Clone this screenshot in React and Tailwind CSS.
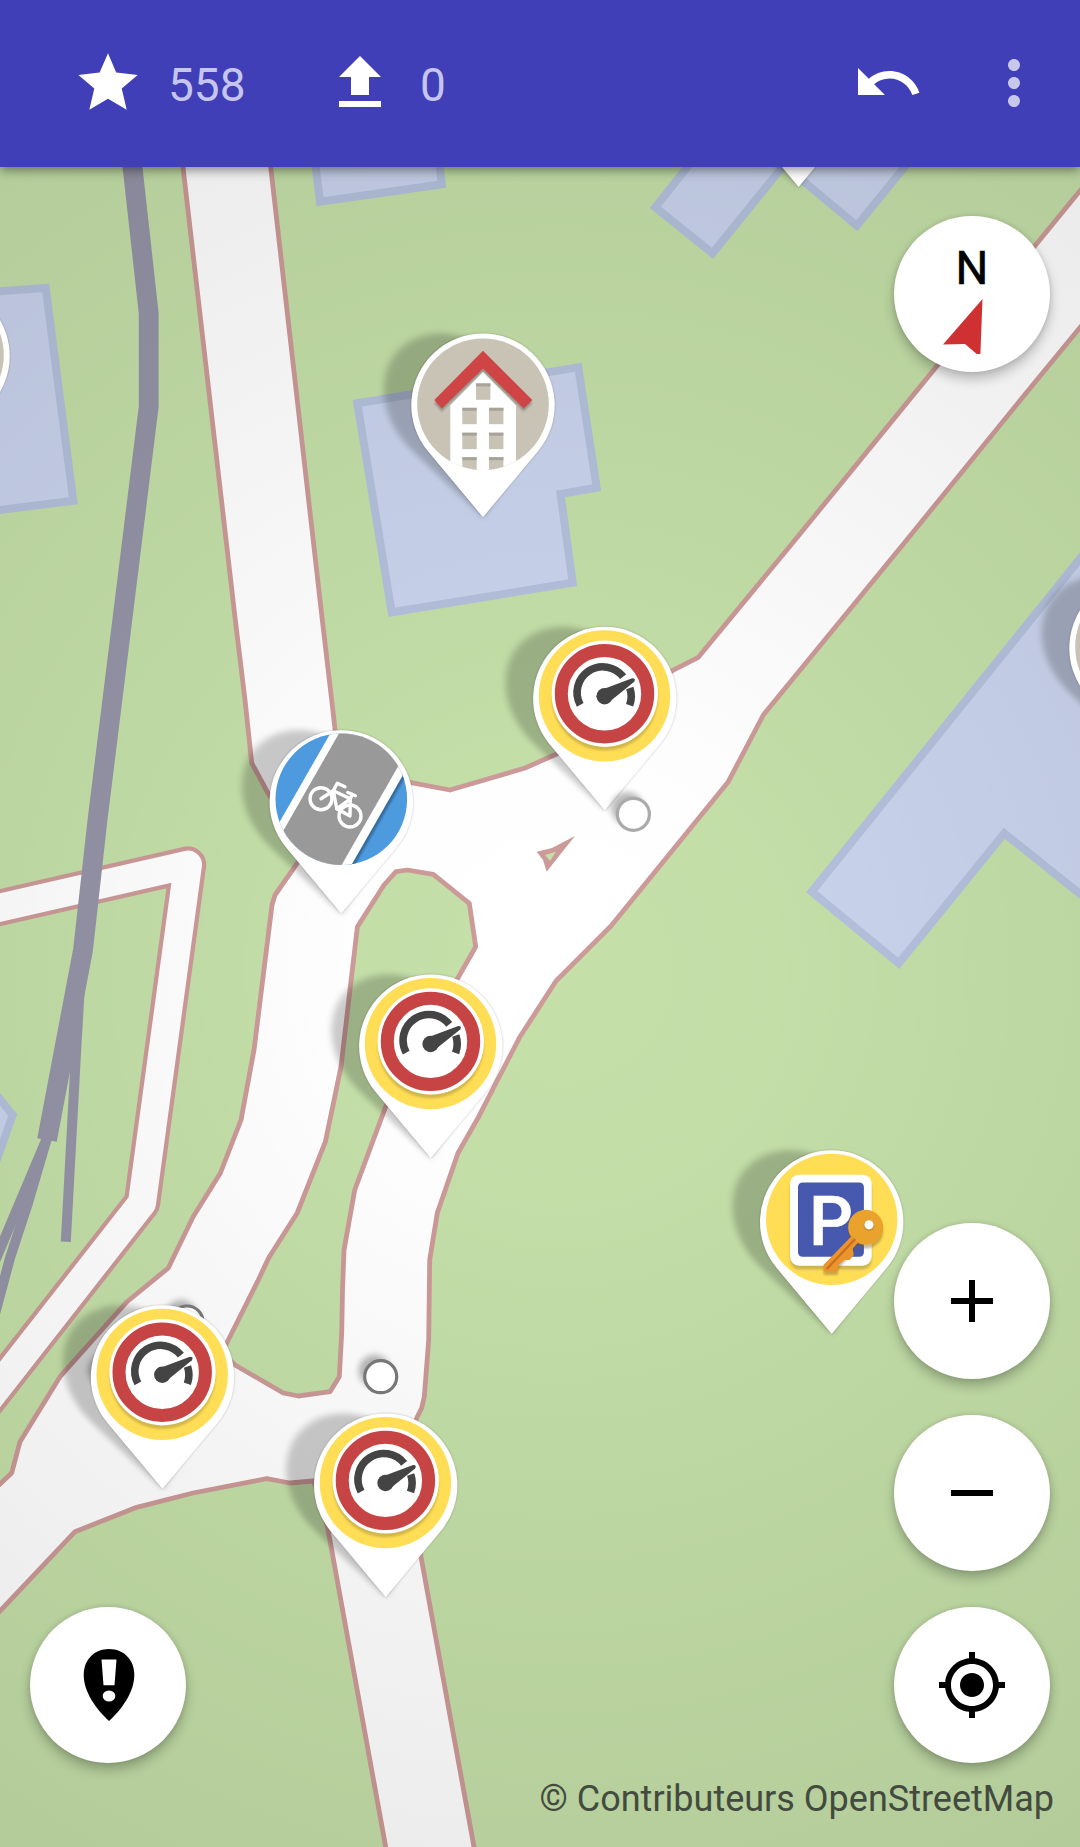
import React from "react";

const TEARDROP = "M0 112 L-55.2 45.8 A71.7 71.7 0 1 1 55.2 45.8 Z";

function Pin({ x, y, children }) {
  return (
    <g transform={`translate(${x} ${y})`}>
      <path d={TEARDROP} transform="matrix(1 0 0.23 1 -25.8 0)" fill="#000" opacity="0.2" filter="url(#pinShadow)" />
      <path d={TEARDROP} fill="#000" opacity="0.24" filter="url(#pinEdge)" />
      <path d={TEARDROP} fill="#fff" />
      {children}
    </g>
  );
}

function SpeedPin({ x, y }) {
  return (
    <Pin x={x} y={y}>
      <circle cx="-0.3" cy="-2.6" r="65.7" fill="#ffdd55" />
      <circle cx="0" cy="-1" r="53" fill="#d2b748" filter="url(#soft)" />
      <circle cx="0" cy="-4.8" r="53.2" fill="#fff" />
      <circle cx="-0.3" cy="-4.8" r="43.2" fill="none" stroke="#c74444" strokeWidth="13" />
      <g transform="translate(0.4 0.8)">
        <g fill="none" stroke="#444" strokeWidth="7.6">
          <path d="M-25 5.6 A25.8 25.8 0 0 1 18 -22.6" />
          <path d="M24.6 -11.4 A25.8 25.8 0 0 1 24.4 6" />
        </g>
        <circle cx="-0.6" cy="-3" r="8.2" fill="#444" />
        <path d="M-5 -9 L27 -21 Q31 -21 29 -17.6 L4 2.6 Z" fill="#444" />
      </g>
    </Pin>
  );
}

function HousePin({ x, y }) {
  const windows = [[-7, -21.8], [-20.7, 2.6], [6, 2.6], [-20.7, 27.5], [6, 27.5], [-20.7, 52], [6, 52]];
  return (
    <Pin x={x} y={y}>
      <circle cx="0" cy="-1" r="65.8" fill="#c8c3b5" />
      <g clipPath="url(#houseClip)">
        <path d="M0 -33.5 L33 0 V72 H-32.7 V0 Z" fill="#fff" />
        {windows.map(([wx, wy], i) => (
          <g key={i}>
            <rect x={wx} y={wy} width="14.4" height="16.4" fill="#c8c3b5" />
            <rect x={wx} y={wy} width="14.4" height="3" fill="#a7a398" />
          </g>
        ))}
      </g>
      <path d="M0 -51.5 L49.3 -2.2 L40.7 6.2 L0 -33.8 L-41.3 6.2 L-48.7 -2.2 Z" fill="#000" opacity="0.25" filter="url(#soft)" />
      <path d="M0 -54.5 L49.3 -5.2 L40.7 3.2 L0 -36.8 L-41.3 3.2 L-48.7 -5.2 Z" fill="#cf4546" />
    </Pin>
  );
}

function BikePin({ x, y }) {
  return (
    <Pin x={x} y={y}>
      <g clipPath="url(#bikeClip)">
        <rect x="-72" y="-72" width="144" height="144" fill="#4d9ade" />
        <g transform="rotate(29.8)">
          <rect x="38" y="-90" width="5.2" height="180" fill="#356a99" filter="url(#soft)" />
          <rect x="-43.5" y="-90" width="83.7" height="180" fill="#fff" />
          <rect x="-36" y="-90" width="67.7" height="180" fill="#999" />
        </g>
      </g>
      <g fill="none" stroke="#fff" strokeWidth="3.4" strokeLinecap="round" strokeLinejoin="round">
        <circle cx="-20.3" cy="-3.1" r="11" />
        <circle cx="8.7" cy="14.2" r="11" />
        <path d="M-20.3 -3.1 L-8 -11 L-4 -18.5 L3.6 -15" />
        <path d="M-8 -11 L-4.5 7 L9 -3 Z" />
        <path d="M-4.5 7 L8.7 14.2 L9 -3 L11 -7.5 M6.5 -9.3 L14 -6" />
      </g>
    </Pin>
  );
}

function ParkingPin({ x, y }) {
  return (
    <Pin x={x} y={y}>
      <circle cx="0" cy="-2.6" r="65.7" fill="#ffdd55" />
      <rect x="-41.7" y="-43.6" width="81.7" height="91" rx="9" fill="#cfb44a" filter="url(#soft)" />
      <rect x="-41.7" y="-47.3" width="81.7" height="91" rx="9" fill="#fff" />
      <rect x="-33.7" y="-39.5" width="65.9" height="74.3" rx="4.5" fill="#4759ae" />
      <text x="-22.6" y="22.8" fontFamily="Roboto, sans-serif" fontWeight="500" fontSize="69" fill="#fff" stroke="#fff" strokeWidth="0.6">P</text>
      <g fill="#775522" opacity="0.4" filter="url(#soft)">
        <circle cx="34" cy="9" r="17.5" />
        <path d="M18 18 L25 26 L14 39 L7 46 L6 53 H-8 V46 Z" />
      </g>
      <circle cx="34" cy="5.3" r="17.5" fill="#e9a32d" />
      <path d="M20.5 13.5 L26 21 L21 26.5 L22 33 L18 38 L12.5 38 L7 43 L5.5 49.5 H-8 L-8.3 43 Z" fill="#e9952b" />
      <path d="M23.5 17 L-5 47" stroke="#ca6d22" strokeWidth="2.2" fill="none" />
      <circle cx="37.3" cy="3.5" r="5.4" fill="#c98b28" />
      <circle cx="37.3" cy="2.8" r="4.6" fill="#fff" />
    </Pin>
  );
}

function Dot({ x, y, stroke = "#777" }) {
  return (
    <g>
      <circle cx={x - 6} cy={y - 6} r="16" fill="#000" opacity="0.28" filter="url(#pinShadow)" />
      <circle cx={x} cy={y} r="16" fill="#fff" stroke={stroke} strokeWidth="3.2" />
    </g>
  );
}

const ROAD_OUTLINE =
  "M176 107 L183 167 L235.3 620 L245 700 L251.7 763 L269 795 L306 845 L298.3 861.7 L275 895 L272 905 L254 1050 L241 1120 L220.4 1173 L193 1217 L168.3 1268 L126.7 1302 L60 1376.7 L20 1441.7 L11.7 1473 L0 1484 L-20 1502 L-20 1632 L0 1611 L75 1531.7 L136.7 1507.3 L193 1493 L266.7 1478.7 L290 1483 L313 1481 L321 1495 L329.3 1536.7 L385.7 1847 L392 1880 L480 1880 L474 1847 L421 1556.7 L405 1450 L416.7 1418 L421.7 1408 L424.3 1396.7 L428.7 1340 L429.7 1260 L437.3 1213 L458 1153 L478.7 1116.7 L496 1083 L520 1036.7 L556 981 L611 926 L728.3 781.7 L763.3 715 L906.7 540 L1020.4 400 L1120 279 L1120 142 L1080 190.7 L1034.8 246 L795 540 L698.3 657.3 L672.3 670.7 L556.7 754 L525 768 L450 790 L411 782.7 L365 775 L340 760 L335 729.3 L331.7 700 L322.3 620 L270.7 167 L264 107 Z";

const ROAD_ISLAND =
  "M396 871.7 L407.3 870 L433.3 874.3 L469.3 903.3 L475.7 946.7 L458.3 977.3 L420 1040 L385.7 1106.7 L354.7 1190 L344 1250 L342.5 1290 L341.7 1333 L339.3 1376.7 L330 1391.7 L298.3 1396 L283.3 1393 L235 1365 L222 1353 L228.3 1340 L258.3 1280 L268.6 1258 L297.2 1213 L325.4 1141.7 L341 1066.7 L357.4 926.7 L384 885 Z";

const FOOTPATH = "M-20 912.2 L188 864.6 L142 1203 L-20 1410";

const BUILDINGS = [
  "M357.3 403.3 L578.3 367.3 L596.7 487.7 L560.5 494 L572.7 582.7 L391.7 612.3 Z",
  "M-20 292.7 L45.7 288 L73.3 500.7 L-20 512.5 Z",
  "M310 120 L320 201.7 L441.8 184.3 L434 120 Z",
  "M730 113 L655.4 207.3 L712.5 253.3 L784 165 L856.8 225.7 L950 111 Z",
  "M1120 509 L811.7 891.7 L898.7 963.3 L1004.3 833.3 L1120 926 Z",
  "M-20 1074 L12.7 1115 L-5 1165 L-20 1165 Z",
];

function MapCanvas() {
  return (
    <svg viewBox="0 167 1080 1680" className="absolute inset-0 h-full w-full" aria-hidden="true">
      <defs>
        <filter id="pinShadow" x="-20%" y="-20%" width="140%" height="140%">
          <feGaussianBlur stdDeviation="3" />
        </filter>
        <filter id="pinEdge" x="-10%" y="-10%" width="120%" height="120%">
          <feGaussianBlur stdDeviation="0.9" />
        </filter>
        <filter id="soft" x="-20%" y="-20%" width="140%" height="140%">
          <feGaussianBlur stdDeviation="0.8" />
        </filter>
        <radialGradient id="vignette" gradientUnits="userSpaceOnUse" cx="560" cy="970" r="1000">
          <stop offset="0" stopColor="#000" stopOpacity="0" />
          <stop offset="0.2" stopColor="#000" stopOpacity="0.004" />
          <stop offset="1" stopColor="#000" stopOpacity="0.085" />
        </radialGradient>
        <clipPath id="houseClip"><circle cx="0" cy="-1" r="65.8" /></clipPath>
        <clipPath id="bikeClip"><circle cx="0" cy="-2.6" r="65.8" /></clipPath>
      </defs>

      <rect y="167" width="1080" height="1680" fill="#c4dfa8" />
      <g fill="#c9d3ec" stroke="#b4c0dc" strokeWidth="8">
        {BUILDINGS.map((d) => <path key={d} d={d} />)}
      </g>
      <g fill="none" strokeLinejoin="round">
        <path d={FOOTPATH} stroke="#cc9a98" strokeWidth="36.5" />
        <path d={FOOTPATH} stroke="#fff" strokeWidth="28" />
      </g>
      <path d={`${ROAD_OUTLINE} ${ROAD_ISLAND}`} fill="#fff" fillRule="evenodd" stroke="#cc9a98" strokeWidth="4.8" strokeLinejoin="round" />
      <path d="M536.7 851.7 L552 848 L575 836 L559 856 L546.7 871.7 L543 860 Z" fill="#cc9a98" />
      <path d="M545 855 L556 851.7 L550 861 Z" fill="#c4dfa8" />
      <g fill="none" stroke="#9594a7">
        <path d="M126 100 L132.5 167 L148.7 313.3 L148.7 406.7 L97.5 820 L83 950 L47 1140" strokeWidth="19.8" />
        <path d="M82 950 L76 1053 L65.8 1241.7" strokeWidth="10" />
        <path d="M47 1138 L-10 1273" strokeWidth="10" />
        <path d="M47 1138 L28 1203 L10 1258 L-8 1325" strokeWidth="10" />
      </g>
      <rect y="167" width="1080" height="1680" fill="url(#vignette)" />

      <Dot x={187} y={1322} />
      <Dot x={110} y={1376} />
      <Dot x={380.7} y={1376.7} />
      <Pin x={798.6} y={75} />
      <HousePin x={-62} y={356} />
      <HousePin x={483} y={405.2} />
      <HousePin x={1141} y={648} />
      <SpeedPin x={604.8} y={698.5} />
      <Dot x={633.4} y={814.3} stroke="#aaa" />
      <BikePin x={341.3} y={801.8} />
      <SpeedPin x={430.8} y={1046.2} />
      <ParkingPin x={831.7} y={1222} />
      <SpeedPin x={162.5} y={1377} />
      <SpeedPin x={385.7} y={1485.2} />
    </svg>
  );
}

function RoundButton({ label, children }) {
  return (
    <button
      aria-label={label}
      className="flex size-[156px] shrink-0 flex-col items-center justify-center rounded-full bg-white text-black shadow-[0_7px_12px_rgba(0,0,0,0.24),0_0_5px_rgba(0,0,0,0.12)]"
    >
      {children}
    </button>
  );
}

function Icon({ d }) {
  return (
    <svg viewBox="0 0 24 24" className="size-[72px]" fill="currentColor">
      <path d={d} />
    </svg>
  );
}

function Toolbar() {
  return (
    <header className="relative z-10 flex h-[167px] items-start bg-[#403fb8] pt-[47px] text-white shadow-[0_3px_10px_rgba(0,0,0,0.45)]">
      <svg viewBox="0 0 72 72" className="ml-[72px] size-[72px]" fill="currentColor">
        <path d="M36 6.3 L44.2 25.6 L65.7 28 L49.7 41.5 L54.7 62.7 L36 51.8 L17.3 62.7 L22.3 41.5 L6.4 28 L27.6 25.6 Z" />
      </svg>
      <span className="ml-[24px] w-[156px] pt-[2px] text-[46px] leading-[72px] text-[#c6c5ee]">558</span>
      <Icon d="M5 20h14v-2H5v2zm0-10h4v6h6v-6h4l-7-7-7 7z" />
      <span className="ml-[24px] pt-[2px] text-[46px] leading-[72px] text-[#c6c5ee]">0</span>
      <div className="ml-auto mr-[30px] flex gap-[54px] text-white">
        <Icon d="M12.5 8c-2.65 0-5.05.99-6.9 2.6L2 7v9h9l-3.62-3.62c1.39-1.16 3.16-1.88 5.12-1.88 3.54 0 6.55 2.31 7.6 5.5l2.37-.78C21.08 11.03 17.15 8 12.5 8z" />
        <div className="text-[#c8c7ec]">
          <Icon d="M12 8c1.1 0 2-.9 2-2s-.9-2-2-2-2 .9-2 2 .9 2 2 2zm0 2c-1.100 0-2 .9-2 2s.9 2 2 2 2-.9 2-2-.9-2-2-2zm0 6c-1.100 0-2 .9-2 2s.9 2 2 2 2-.9 2-2-.9-2-2-2z" />
        </div>
      </div>
    </header>
  );
}

export default function App() {
  return (
    <div className="flex h-[1847px] w-[1080px] flex-col overflow-hidden font-[Roboto,sans-serif]">
      <Toolbar />
      <main className="relative flex h-[1680px] flex-col">
        <MapCanvas />
        <div className="relative flex flex-1 items-end justify-between px-[30px] pt-[49px]">
          <RoundButton label="Notes">
            <svg viewBox="0 0 52 72" className="ml-[2px] h-[72px] w-[52px]">
              <path d="M26 0 C11 0 0.700 11 0.700 26 C0.700 43 13 60 26 72 C39 60 51.300 43 51.300 26 C51.300 11 41 0 26 0 Z" fill="#000" />
              <path d="M18.500 10.500 H33.500 L31.500 36.300 H20.500 Z" fill="#fff" />
              <ellipse cx="26" cy="47" rx="6.300" ry="5.600" fill="#fff" />
            </svg>
          </RoundButton>
          <div className="flex h-full flex-col gap-9">
            <div className="mb-auto">
              <RoundButton label="Compass">
                <span className="mt-[9px] text-[46px] leading-[50px] [-webkit-text-stroke:0.6px_#000]">N</span>
                <svg viewBox="0 0 40 56" className="mt-[6px] mr-[18px] h-[56px] w-[40px]">
                  <path d="M39.500 0 L0 45.600 L22 45 L33.700 55 H37.400 Z" fill="#cf3133" />
                </svg>
              </RoundButton>
            </div>
            <RoundButton label="Zoom in"><Icon d="M19 13h-6v6h-2v-6H5v-2h6V5h2v6h6v2z" /></RoundButton>
            <RoundButton label="Zoom out"><Icon d="M19 13H5v-2h14v2z" /></RoundButton>
            <RoundButton label="Locate">
              <Icon d="M12 8c-2.210 0-4 1.790-4 4s1.790 4 4 4 4-1.790 4-4-1.790-4-4-4zm8.940 3c-.46-4.170-3.770-7.480-7.940-7.940V1h-2v2.060C6.830 3.520 3.520 6.830 3.060 11H1v2h2.060c.46 4.170 3.770 7.480 7.940 7.940V23h2v-2.060c4.170-.46 7.480-3.770 7.940-7.940H23v-2h-2.060zM12 19c-3.870 0-7-3.130-7-7s3.130-7 7-7 7 3.130 7 7-3.130 7-7 7z" />
            </RoundButton>
          </div>
        </div>
        <footer className="relative h-[84px] pr-[26px] pt-[12px] text-right text-[36px] leading-[48px] text-[#434b3e]">
          © Contributeurs OpenStreetMap
        </footer>
      </main>
    </div>
  );
}
